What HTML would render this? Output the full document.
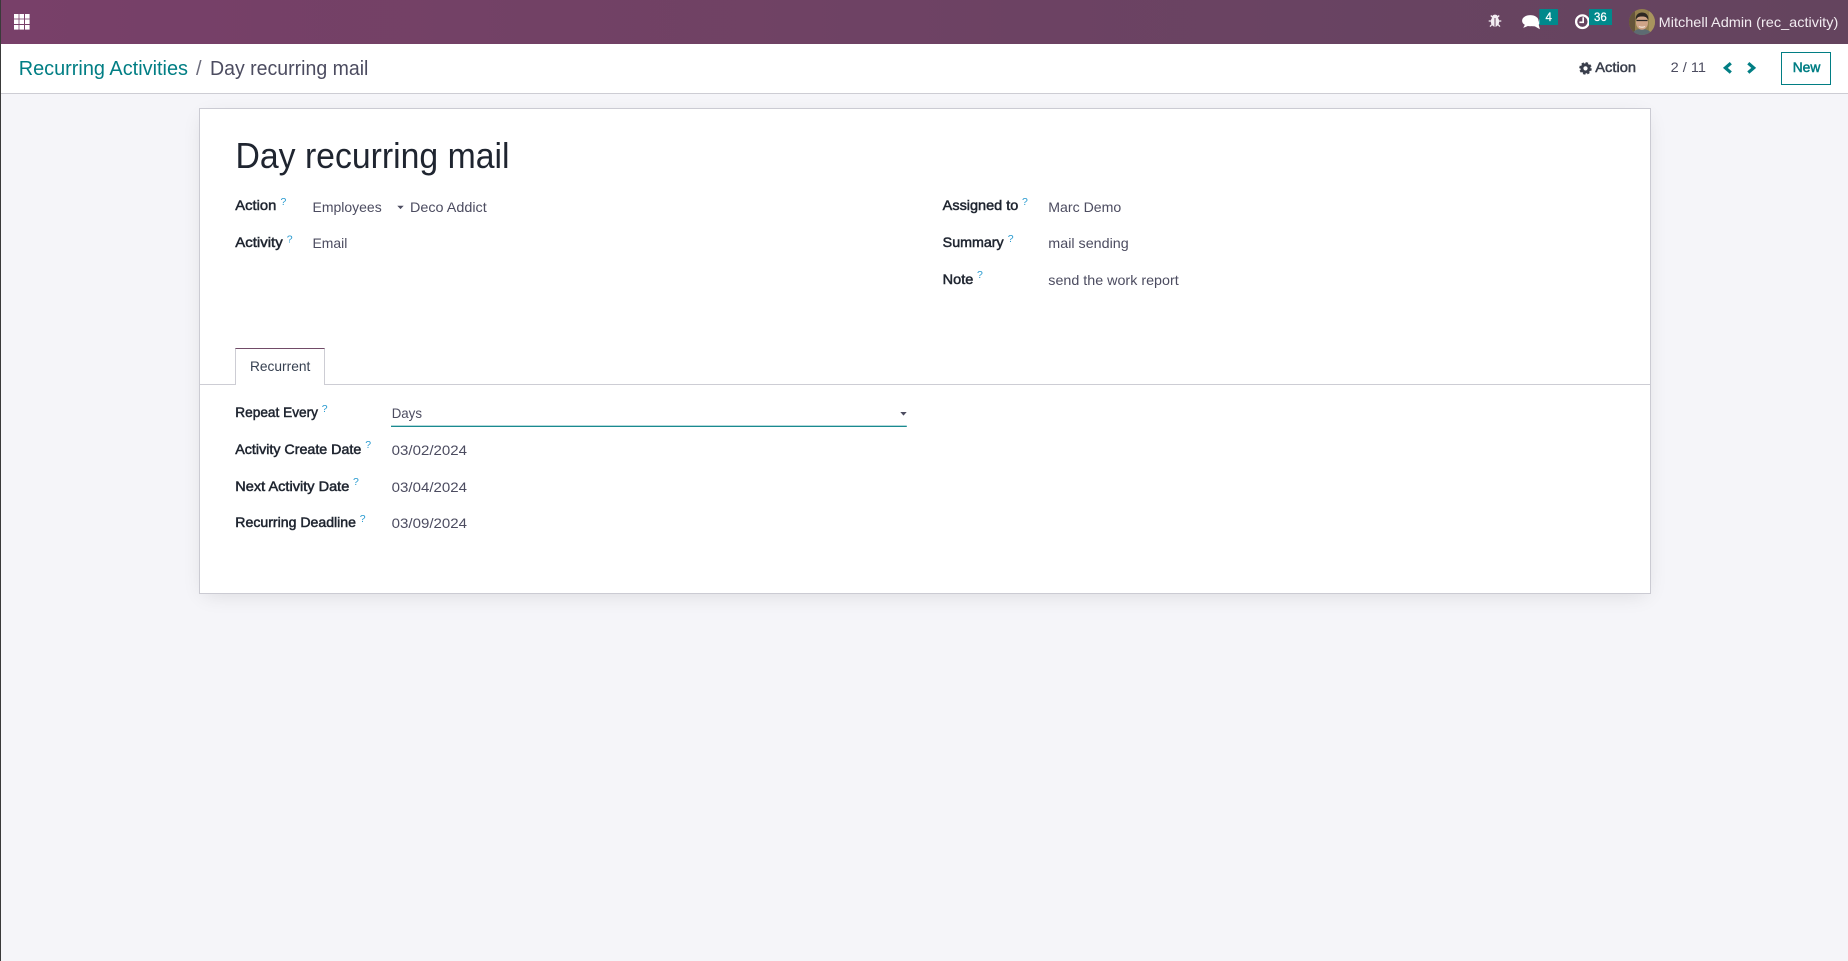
<!DOCTYPE html>
<html lang="en">
<head>
<meta charset="utf-8">
<title>Day recurring mail</title>
<style>
html,body{margin:0;padding:0;width:1848px;height:961px;overflow:hidden;background:#f5f5f9;font-family:"Liberation Sans",sans-serif}
.strip{position:absolute;left:0;top:0;width:1px;height:961px;background:#3a3a3a;z-index:5}
.nav{position:absolute;left:0;top:0;width:1848px;height:44px;background:linear-gradient(90deg,#784069 0%,#724165 30%,#694362 70%,#64445e 100%)}
.cp{position:absolute;left:0;top:44px;width:1848px;height:49px;background:#fff;border-bottom:1px solid #cdcdd4}
.card{position:absolute;left:199px;top:108px;width:1450px;height:484px;background:#fff;border:1px solid #cbcbd3;box-shadow:0 5px 20px -5px rgba(0,0,0,.12)}
.tabline{position:absolute;left:200px;top:384px;width:1450px;height:1px;background:#cdcdd4}
.tab{position:absolute;left:235px;top:348px;width:90px;height:37px;box-sizing:border-box;background:#fff;border:1px solid #cdcdd4;border-top-color:#714b67;border-bottom:0}
.new{position:absolute;left:1781px;top:52px;width:50px;height:33px;box-sizing:border-box;border:1px solid #017e84}
svg.o{position:absolute;left:0;top:0;z-index:3}
text{font-family:"Liberation Sans",sans-serif}
.l{font-size:14px;fill:#1f2530;stroke:#1f2530;stroke-width:.5px}
.v{font-size:14px;fill:#4c4c60}
.q{font-size:10.5px;fill:#2a9bd0}
</style>
</head>
<body>
<div class="strip"></div>
<div class="nav"></div>
<div class="cp"></div>
<div class="card"></div>
<div class="tabline"></div>
<div class="tab"></div>
<div class="new"></div>
<svg class="o" width="1848" height="961" viewBox="0 0 1848 961" xmlns="http://www.w3.org/2000/svg">
<defs><clipPath id="av"><circle cx="1642" cy="22" r="13"/></clipPath></defs>

<!-- apps grid -->
<g fill="#fff">
<rect x="14" y="14" width="4.6" height="4.6"/><rect x="19.4" y="14" width="4.6" height="4.6"/><rect x="25" y="14" width="4.6" height="4.6"/>
<rect x="14" y="19.4" width="4.6" height="4.6"/><rect x="19.4" y="19.4" width="4.6" height="4.6"/><rect x="25" y="19.4" width="4.6" height="4.6"/>
<rect x="14" y="25" width="4.6" height="4.6"/><rect x="19.4" y="25" width="4.6" height="4.6"/><rect x="25" y="25" width="4.6" height="4.6"/>
</g>

<!-- breadcrumb -->
<text x="18.7" y="75" font-size="20" fill="#017e84" textLength="169.3" lengthAdjust="spacingAndGlyphs">Recurring Activities</text>
<text x="196" y="75" font-size="20" fill="#6b6b7b">/</text>
<text x="210" y="75" font-size="20" fill="#4c4c60" textLength="158.4" lengthAdjust="spacingAndGlyphs">Day recurring mail</text>

<!-- bug -->
<g fill="#f3edf2">
<ellipse cx="1495" cy="21.5" rx="4.2" ry="5.2"/>
<ellipse cx="1495" cy="16.3" rx="2.6" ry="1.7"/>
</g>
<g stroke="#f3edf2" stroke-width="1.3" fill="none">
<path d="M1490.8 15.5l2 2M1499.2 15.5l-2 2M1488.7 21h4M1501.3 21h-4M1490 26.6l2.2-2.3M1500 26.6l-2.2-2.3"/>
</g>
<path d="M1495 18v8.5" stroke="#66445e" stroke-width="1"/>

<!-- chat -->
<g fill="#fff">
<ellipse cx="1530.3" cy="20.7" rx="8.2" ry="5.6"/>
<path d="M1525 24.5l-1.8 3.4 5-2z"/>
<path d="M1539.3 19.2c1 1.8 .8 4-.6 5.6l1.2 4.4-5-2.8-3.2-.3c3.5-.8 7.2-3 7.6-6.9z"/>
</g>
<rect x="1539.3" y="9" width="18.7" height="16" fill="#00898c"/>
<text x="1548.7" y="21" font-size="11.5" fill="#fff" stroke="#fff" stroke-width=".25" text-anchor="middle">4</text>

<!-- clock -->
<circle cx="1582.4" cy="21.7" r="6.3" fill="none" stroke="#fff" stroke-width="2.3"/>
<path d="M1583.2 17.3v5h-3.8" fill="none" stroke="#fff" stroke-width="1.6"/>
<rect x="1589" y="9" width="23" height="16" fill="#00898c"/>
<text x="1594" y="21" font-size="11.5" fill="#fff" stroke="#fff" stroke-width=".25" textLength="12.7" lengthAdjust="spacingAndGlyphs">36</text>

<!-- avatar -->
<g clip-path="url(#av)">
<rect x="1629" y="9" width="26" height="26" fill="#94804e"/>
<rect x="1629" y="9" width="6" height="26" fill="#66553a"/>
<rect x="1649" y="9" width="6" height="26" fill="#a8945e"/>
<path d="M1632 36c1-6 5-7 10-7s9 2 11 7z" fill="#5d6b72"/>
<ellipse cx="1642" cy="22.5" rx="6" ry="7.3" fill="#cfa488"/>
<path d="M1635.7 20c-.5-5 3-7.5 6.3-7.5s7 2 6.3 7.5c-1.5-3-3-3.5-6.3-3.5s-4.8 .5-6.3 3.5z" fill="#2c2622"/>
<path d="M1636.5 20.5h11" stroke="#2a2a2a" stroke-width="1.3"/>
<path d="M1639 26.5c2 1 4 1 6 0" stroke="#f0e2d6" stroke-width="1.2" fill="none"/>
</g>
<text x="1658.7" y="27" font-size="14" fill="#f2ecf1" textLength="179.6" lengthAdjust="spacingAndGlyphs">Mitchell Admin (rec_activity)</text>

<!-- action -->
<circle cx="1585.5" cy="68.4" r="3.6" fill="none" stroke="#3a3f4c" stroke-width="3"/>
<circle cx="1585.5" cy="68.4" r="5.3" fill="none" stroke="#3a3f4c" stroke-width="1.9" stroke-dasharray="2.4 1.76"/>
<text x="1595.3" y="72" font-size="14" fill="#3a3f4c" stroke="#3a3f4c" stroke-width=".5" textLength="40.7" lengthAdjust="spacingAndGlyphs">Action</text>
<text x="1670.7" y="72" font-size="14" fill="#4c4c60" textLength="35.3" lengthAdjust="spacingAndGlyphs">2 / 11</text>
<path d="M1730.8 63.2l-5.4 4.7 5.4 4.7" fill="none" stroke="#017e84" stroke-width="3.2"/>
<path d="M1748.3 63.2l5.4 4.7-5.4 4.7" fill="none" stroke="#017e84" stroke-width="3.2"/>
<text x="1792.7" y="72" font-size="14" fill="#017e84" stroke="#017e84" stroke-width=".5" textLength="27.6" lengthAdjust="spacingAndGlyphs">New</text>

<!-- title -->
<text x="235.5" y="168" font-size="36" fill="#1f2530" textLength="274" lengthAdjust="spacingAndGlyphs">Day recurring mail</text>

<!-- left group -->
<text class="l" x="235.3" y="210" textLength="41" lengthAdjust="spacingAndGlyphs">Action</text>
<text class="q" x="280.5" y="205">?</text>
<text class="v" x="312.5" y="212" textLength="69.2" lengthAdjust="spacingAndGlyphs">Employees</text>
<path d="M397.3 205.7h6.4l-3.2 3.4z" fill="#4c4c60"/>
<text class="v" x="410" y="212" textLength="76.7" lengthAdjust="spacingAndGlyphs">Deco Addict</text>

<text class="l" x="235.3" y="247" textLength="47.4" lengthAdjust="spacingAndGlyphs">Activity</text>
<text class="q" x="286.8" y="242.5">?</text>
<text class="v" x="312.5" y="248" textLength="34.8" lengthAdjust="spacingAndGlyphs">Email</text>

<!-- right group -->
<text class="l" x="942.7" y="210" textLength="75.6" lengthAdjust="spacingAndGlyphs">Assigned to</text>
<text class="q" x="1022" y="205">?</text>
<text class="v" x="1048.3" y="212" textLength="73" lengthAdjust="spacingAndGlyphs">Marc Demo</text>

<text class="l" x="942.7" y="247" textLength="61" lengthAdjust="spacingAndGlyphs">Summary</text>
<text class="q" x="1007.8" y="242">?</text>
<text class="v" x="1048.3" y="248" textLength="80.4" lengthAdjust="spacingAndGlyphs">mail sending</text>

<text class="l" x="942.7" y="284" textLength="30.6" lengthAdjust="spacingAndGlyphs">Note</text>
<text class="q" x="977" y="278">?</text>
<text class="v" x="1048.3" y="285" textLength="130.4" lengthAdjust="spacingAndGlyphs">send the work report</text>

<!-- tab -->
<text x="250" y="371" font-size="14" fill="#374151" textLength="60.3" lengthAdjust="spacingAndGlyphs">Recurrent</text>

<!-- recurrent page -->
<text class="l" x="235.3" y="417" textLength="82.7" lengthAdjust="spacingAndGlyphs">Repeat Every</text>
<text class="q" x="321.8" y="412">?</text>
<text class="v" x="391.7" y="418" textLength="30.3" lengthAdjust="spacingAndGlyphs">Days</text>
<rect x="391" y="425.7" width="515.8" height="1.2" fill="#017e84"/>
<path d="M900.3 412h6.4l-3.2 3.6z" fill="#4c4c60"/>

<text class="l" x="235.3" y="454" textLength="126" lengthAdjust="spacingAndGlyphs">Activity Create Date</text>
<text class="q" x="365.3" y="448">?</text>
<text class="v" x="391.7" y="455" textLength="75.3" lengthAdjust="spacingAndGlyphs">03/02/2024</text>

<text class="l" x="235.3" y="491" textLength="114" lengthAdjust="spacingAndGlyphs">Next Activity Date</text>
<text class="q" x="353" y="485">?</text>
<text class="v" x="391.7" y="492" textLength="75.3" lengthAdjust="spacingAndGlyphs">03/04/2024</text>

<text class="l" x="235.3" y="527" textLength="120.7" lengthAdjust="spacingAndGlyphs">Recurring Deadline</text>
<text class="q" x="359.8" y="522">?</text>
<text class="v" x="391.7" y="528" textLength="75.3" lengthAdjust="spacingAndGlyphs">03/09/2024</text>
</svg>
</body>
</html>
